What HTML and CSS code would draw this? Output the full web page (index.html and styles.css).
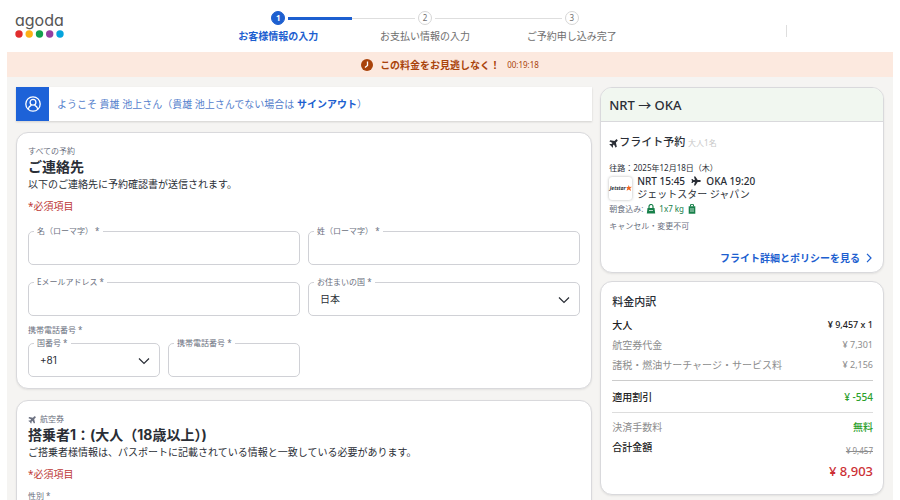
FILE: index.html
```
<!DOCTYPE html>
<html lang="ja">
    <head>
        <meta charset="utf-8" />
        <title>agoda - お客様情報の入力</title>
        <meta name="viewport" content="width=device-width, initial-scale=1" />
        <link rel="stylesheet" href="styles.css">
    </head>

    <body>
        <!-- shared glyphs, the plane points to the right -->
        <svg class="sprite" aria-hidden="true">
            <symbol id="plane" viewBox="0 0 24 24">
                <path d="M23.500 12c0-1.500-1.300-2.400-3-2.400h-4.500L10.500 1H7l2.400 8.600H5.800L3.700 7H1l1.400 5L1 17h2.700l2.100-2.600h3.600L7 23h3.500l5.500-8.600h4.500c1.700 0 3-.9 3-2.400z" />
            </symbol>
            <symbol id="chevron" viewBox="0 0 12 8">
                <path d="M1 1.500l5 5 5-5" fill="none" stroke="currentColor" stroke-width="1.200" />
            </symbol>
        </svg>

        <header class="header">
            <a class="logo" href="#" aria-label="agoda">
                <span class="logo-text">agoda</span>
                <svg class="logo-dots" viewBox="0 0 50 8" aria-hidden="true">
                    <circle cx="4" cy="4" r="3.700" fill="#e12d2d" />
                    <circle cx="14.200" cy="4" r="3.700" fill="#fcb116" />
                    <circle cx="24.500" cy="4" r="3.700" fill="#12a04e" />
                    <circle cx="34.700" cy="4" r="3.700" fill="#963fa0" />
                    <circle cx="45" cy="4" r="3.700" fill="#05a4dd" />
                </svg>
            </a>
            <ol class="steps">
                <li class="step active">
                    <div class="step-track"><span class="step-number">1</span></div>
                    お客様情報の入力
                </li>
                <li class="step">
                    <div class="step-track"><span class="step-number">2</span></div>
                    お支払い情報の入力
                </li>
                <li class="step">
                    <div class="step-track"><span class="step-number">3</span></div>
                    ご予約申し込み完了
                </li>
            </ol>
            <div class="account"></div>
        </header>

        <div class="page">
            <div class="countdown">
                <svg viewBox="0 0 12 12" aria-hidden="true">
                    <circle cx="6" cy="6" r="6" fill="#a9430b" />
                    <path d="M6.500 2.500V6.500L4 8.500" fill="none" stroke="#fff" stroke-width="1.300" />
                </svg>
                <strong>この料金をお見逃しなく！</strong>
                <span class="countdown-time">00:19:18</span>
            </div>

            <div class="content">
                <main class="main">
                    <div class="welcome">
                        <div class="welcome-icon">
                            <svg viewBox="0 0 16 16" aria-hidden="true">
                                <circle cx="8" cy="8" r="7.200" />
                                <circle cx="8" cy="6.200" r="2.900" />
                                <path d="M3.200 13.200c.5-2.400 2-3.400 3.300-4M12.800 13.200c-.5-2.400-2-3.400-3.300-4" />
                            </svg>
                        </div>
                        <p>ようこそ 貴雄 池上さん（貴雄 池上さんでない場合は <a href="#">サインアウト</a>）</p>
                    </div>

                    <section class="card">
                        <p class="eyebrow">すべての予約</p>
                        <h2>ご連絡先</h2>
                        <p class="lead">以下のご連絡先に予約確認書が送信されます。</p>
                        <p class="required">*必須項目</p>

                        <form class="contact-form">
                            <div class="fields">
                                <div class="field wide">
                                    <label for="first-name">名（ローマ字） *</label>
                                    <input id="first-name" type="text" />
                                </div>
                                <div class="field wide">
                                    <label for="last-name">姓（ローマ字） *</label>
                                    <input id="last-name" type="text" />
                                </div>
                                <div class="field wide">
                                    <label for="email">Eメールアドレス *</label>
                                    <input id="email" type="email" />
                                </div>
                                <div class="field wide">
                                    <label for="country">お住まいの国 *</label>
                                    <select id="country">
                                        <option>日本</option>
                                    </select>
                                    <svg class="chevron"><use href="#chevron" /></svg>
                                </div>
                            </div>
                            <p class="group-label">携帯電話番号 *</p>
                            <div class="fields">
                                <div class="field">
                                    <label for="country-code">国番号 *</label>
                                    <select id="country-code">
                                        <option>+81</option>
                                    </select>
                                    <svg class="chevron"><use href="#chevron" /></svg>
                                </div>
                                <div class="field">
                                    <label for="phone">携帯電話番号 *</label>
                                    <input id="phone" type="tel" />
                                </div>
                            </div>
                        </form>
                    </section>

                    <section class="card">
                        <p class="eyebrow"><svg class="plane tilted"><use href="#plane" /></svg>航空券</p>
                        <h2>搭乗者1：(大人（18歳以上）)</h2>
                        <p class="lead">ご搭乗者様情報は、パスポートに記載されている情報と一致している必要があります。</p>
                        <p class="required">*必須項目</p>
                        <p class="gender-label">性別 *</p>
                    </section>
                </main>

                <aside class="sidebar">
                    <section class="card flight">
                        <h2 class="route">NRT → OKA</h2>
                        <div class="flight-body">
                            <h3><svg class="plane tilted"><use href="#plane" /></svg>フライト予約 <small>大人1名</small></h3>
                            <p class="date">往路：2025年12月18日（木）</p>
                            <div class="leg">
                                <div class="airline">
                                    <span>Jetstar</span>
                                    <svg viewBox="0 0 10 10" aria-hidden="true">
                                        <path d="M4.500 0l1.400 3.200L10 3 7 5.600 8.500 10 4.700 7.300 1 9.500l1.300-4L0 3.300l3.400-.1z" fill="#f0641e" />
                                    </svg>
                                </div>
                                <div>
                                    <p class="times">NRT 15:45 <svg class="plane"><use href="#plane" /></svg> OKA 19:20</p>
                                    <p class="carrier">ジェットスター ジャパン</p>
                                </div>
                            </div>
                            <p class="baggage">
                                朝食込み:
                                <svg viewBox="0 0 10 10" aria-hidden="true">
                                    <path d="M3 4.500V2.500a2 2 0 0 1 4 0v2" fill="none" stroke="currentColor" stroke-width="1.200" />
                                    <path d="M1.500 4h7l.7 5.500H.8z" />
                                    <path d="M3 6.500h4" stroke="#fff" stroke-width=".7" />
                                </svg>
                                <span>1x7 kg</span>
                                <svg viewBox="0 0 10 10" aria-hidden="true">
                                    <path d="M3.500 2.500V.6h3v1.900" fill="none" stroke="currentColor" />
                                    <path d="M1.700 2.300h6.600v7.400H1.700z" />
                                    <path d="M4 4v4M6 4v4" stroke="#fff" stroke-width=".7" />
                                </svg>
                            </p>
                            <p class="policy">キャンセル・変更不可</p>
                            <a class="details" href="#">
                                フライト詳細とポリシーを見る
                                <svg viewBox="0 0 6 10" aria-hidden="true">
                                    <path d="M1 .8L5 5 1 9.200" fill="none" stroke="currentColor" stroke-width="1.200" />
                                </svg>
                            </a>
                        </div>
                    </section>

                    <section class="card price">
                        <h3>料金内訳</h3>
                        <table>
                            <tbody>
                                <tr class="strong">
                                    <th scope="row">大人</th>
                                    <td>¥ 9,457 x 1</td>
                                </tr>
                                <tr>
                                    <th scope="row">航空券代金</th>
                                    <td>¥ 7,301</td>
                                </tr>
                                <tr>
                                    <th scope="row">諸税・燃油サーチャージ・サービス料</th>
                                    <td>¥ 2,156</td>
                                </tr>
                            </tbody>
                            <tbody class="discount">
                                <tr class="strong">
                                    <th scope="row">適用割引</th>
                                    <td class="green">¥ -554</td>
                                </tr>
                            </tbody>
                            <tbody class="totals">
                                <tr>
                                    <th scope="row">決済手数料</th>
                                    <td class="green">無料</td>
                                </tr>
                                <tr class="strong total">
                                    <th scope="row">合計金額</th>
                                    <td><del>¥ 9,457</del><strong>¥ 8,903</strong></td>
                                </tr>
                            </tbody>
                        </table>
                    </section>
                </aside>
            </div>
        </div>
    </body>
</html>
```
FILE: styles.css
```
* {
    box-sizing: border-box;
}

html,
body {
    --blue: #1d5fd0;
    --green: #2ca02c;
    --text: #2a2e36;
    --muted: #6b7080;
    --border: #d9d9dc;

    margin: 0;
    padding: 0;
    background: #fff;
    color: var(--text);
    font-family: 'Noto Sans', 'Noto Sans CJK JP', sans-serif;
    font-size: 10px;
    line-height: 14px;
}

h2,
h3,
p,
ol {
    margin: 0;
    padding: 0;
}

a {
    color: var(--blue);
    font-weight: 700;
    text-decoration: none;
}

.sprite {
    display: none;
}

.plane {
    width: 10px;
    height: 10px;
    fill: currentColor;
    vertical-align: middle;
}

.tilted {
    transform: rotate(-45deg);
}

/* header */

.header {
    display: grid;
    grid-template-columns: 41fr 88fr 51fr;
    height: 52px;
}

.logo {
    display: flex;
    flex-direction: column;
    padding: 10px 0 0 15px;
}

.logo-text {
    color: #555;
    font-family: Inter, sans-serif;
    font-feature-settings: 'cv11';
    font-size: 16px;
    font-weight: 400;
    line-height: 20px;
}

.logo-dots {
    width: 50px;
    height: 8px;
}

.steps {
    display: grid;
    grid-template-columns: repeat(3, 1fr);
    padding-top: 11px;
    list-style: none;
}

.step {
    color: #6e6e6e;
    text-align: center;
}

.step-track {
    display: flex;
    align-items: center;
    gap: 3px;
    margin-bottom: 4px;
}

.step-track::before,
.step-track::after {
    content: '';
    flex: 1;
    height: 1px;
    background: #dedede;
}

.step:first-child .step-track::before,
.step:last-child .step-track::after {
    visibility: hidden;
}

.step-number {
    width: 14px;
    height: 14px;
    border: 1px solid #d6d6d6;
    border-radius: 50%;
    font-size: 8px;
    line-height: 12px;
}

.active {
    color: var(--blue);
    font-weight: 700;
}

.active .step-number {
    border-color: var(--blue);
    background: var(--blue);
    color: #fff;
}

.active .step-track::after {
    height: 3px;
    background: var(--blue);
}

.account {
    align-self: end;
    justify-self: end;
    width: 114px;
    height: 12px;
    margin-bottom: 15px;
    border-left: 1px solid #dedede;
}

/* page */

.page {
    min-height: calc(100vh - 52px);
    margin: 0 7px;
    background: #f5f4f2;
}

.countdown {
    display: flex;
    align-items: center;
    justify-content: center;
    gap: 7px;
    height: 25px;
    background: #fce9df;
    color: #a9430b;
}

.countdown svg {
    width: 12px;
    height: 12px;
}

.countdown-time {
    font-size: 8px;
}

.content {
    display: grid;
    grid-template-columns: 67fr 33fr;
    align-items: start;
    gap: 8px;
    padding: 10px 9px 0;
}

.main {
    display: grid;
    gap: 11px;
}

.sidebar {
    display: grid;
    gap: 8px;
}

.card {
    padding: 12px 11px 11px;
    border: 1px solid var(--border);
    border-radius: 12px;
    background: #fff;
    box-shadow: 0 1px 2px rgba(0, 0, 0, 0.08);
}

.welcome {
    display: flex;
    align-items: center;
    gap: 8px;
    height: 34px;
    background: #fff;
    box-shadow: 0 1px 2px rgba(0, 0, 0, 0.15);
    color: #5580cc;
}

.welcome-icon {
    display: grid;
    place-items: center;
    align-self: stretch;
    width: 33px;
    background: #1d62d8;
}

.welcome-icon svg {
    width: 16px;
    height: 16px;
    fill: none;
    stroke: #fff;
    stroke-width: 1.3;
}

/* contact form */

.eyebrow {
    color: var(--muted);
    font-size: 8px;
    line-height: 12px;
}

.eyebrow .plane {
    margin-right: 3px;
    width: 9px;
    height: 9px;
}

.main h2 {
    font-family: Inter, 'Noto Sans CJK JP', sans-serif;
    font-size: 14px;
    line-height: 20px;
}

.required {
    margin-top: 8px;
    color: #bd3a38;
}

.gender-label {
    margin-top: 8px;
    color: var(--muted);
    font-size: 8px;
}

.contact-form {
    margin-top: 18px;
}

.fields {
    display: grid;
    grid-template-columns: repeat(4, 1fr);
    gap: 17px 8px;
}

.field {
    position: relative;
}

.wide {
    grid-column: span 2;
}

.field label {
    position: absolute;
    top: -6px;
    left: 6px;
    padding: 0 3px;
    background: #fff;
    color: var(--muted);
    font-size: 8px;
    line-height: 12px;
}

.field input,
.field select {
    display: block;
    width: 100%;
    height: 34px;
    padding: 0 11px;
    border: 1px solid #d0d1d6;
    border-radius: 5px;
    background: #fff;
    color: var(--text);
    font-family: Inter, 'Noto Sans CJK JP', sans-serif;
    font-size: 10px;
    appearance: none;
}

.chevron {
    position: absolute;
    top: 14px;
    right: 10px;
    width: 12px;
    height: 8px;
    pointer-events: none;
}

.group-label {
    margin: 8px 0 7px;
    color: var(--muted);
    font-size: 8px;
    line-height: 12px;
}

/* flight summary */

.flight {
    padding: 0;
    overflow: hidden;
}

.route {
    padding: 7px 8px 6px;
    border-bottom: 1px solid var(--border);
    background: #f1f7f0;
    font-size: 13px;
    font-weight: 500;
    line-height: 20px;
}

.flight-body {
    display: grid;
    padding: 11px 8px 7px;
}

.sidebar h3 {
    font-size: 11px;
    font-weight: 500;
    line-height: 18px;
}

.flight h3 small {
    color: #c8c8c8;
    font-size: 8px;
    font-weight: 400;
}

.date {
    margin-top: 9px;
    font-size: 8px;
    line-height: 14px;
}

.leg {
    display: flex;
    align-items: center;
    gap: 5px;
}

.airline {
    display: flex;
    align-items: center;
    justify-content: center;
    width: 23px;
    height: 23px;
    border-radius: 3px;
    box-shadow: 0 0 3px rgba(0, 0, 0, 0.3);
    font-size: 5px;
    font-style: italic;
    font-weight: 700;
}

.airline svg {
    width: 6px;
    height: 6px;
}

.times {
    font-weight: 500;
    line-height: 13px;
}

.times .plane {
    margin: -2px 3px 0;
}

.carrier {
    line-height: 13px;
}

.baggage {
    display: flex;
    align-items: center;
    gap: 3px;
    margin-top: 1px;
}

.baggage,
.policy {
    color: var(--muted);
    font-size: 8px;
}

.baggage span,
.baggage svg {
    color: #18804a;
}

.baggage svg {
    width: 10px;
    height: 10px;
    fill: currentColor;
}

.policy {
    margin-top: 3px;
}

.details {
    display: flex;
    align-items: center;
    justify-self: end;
    gap: 6px;
    margin: 18px 3px 0 0;
}

.details svg {
    width: 6px;
    height: 10px;
}

/* price breakdown */

.price {
    padding: 11px 10px 10px 11px;
}

.price table {
    width: 100%;
    margin-top: 4px;
    border-collapse: collapse;
    color: #8d8d8d;
}

.price th,
.price td {
    padding: 3px 0;
    font-weight: 400;
    text-align: left;
    vertical-align: top;
}

.price td {
    font-size: 9px;
    text-align: right;
}

.price .strong th,
.price .strong td {
    color: #222;
    font-weight: 500;
}

.discount::before,
.totals::before {
    content: '';
    display: table-row;
    height: 5px;
}

.discount tr {
    border-top: 1px solid #ccc;
    border-bottom: 1px solid #ddd;
}

.discount th,
.discount td {
    padding: 9px 0 8px;
}

.price tr td.green {
    color: var(--green);
    font-size: 10px;
    font-weight: 500;
}

.price del {
    display: block;
    margin-top: 5px;
    color: #8d8d8d;
    font-size: 8px;
    font-weight: 400;
    line-height: 12px;
}

.total strong {
    display: block;
    margin-top: 4px;
    color: #cc2f35;
    font-size: 13px;
    font-weight: 500;
    line-height: 20px;
}
```
